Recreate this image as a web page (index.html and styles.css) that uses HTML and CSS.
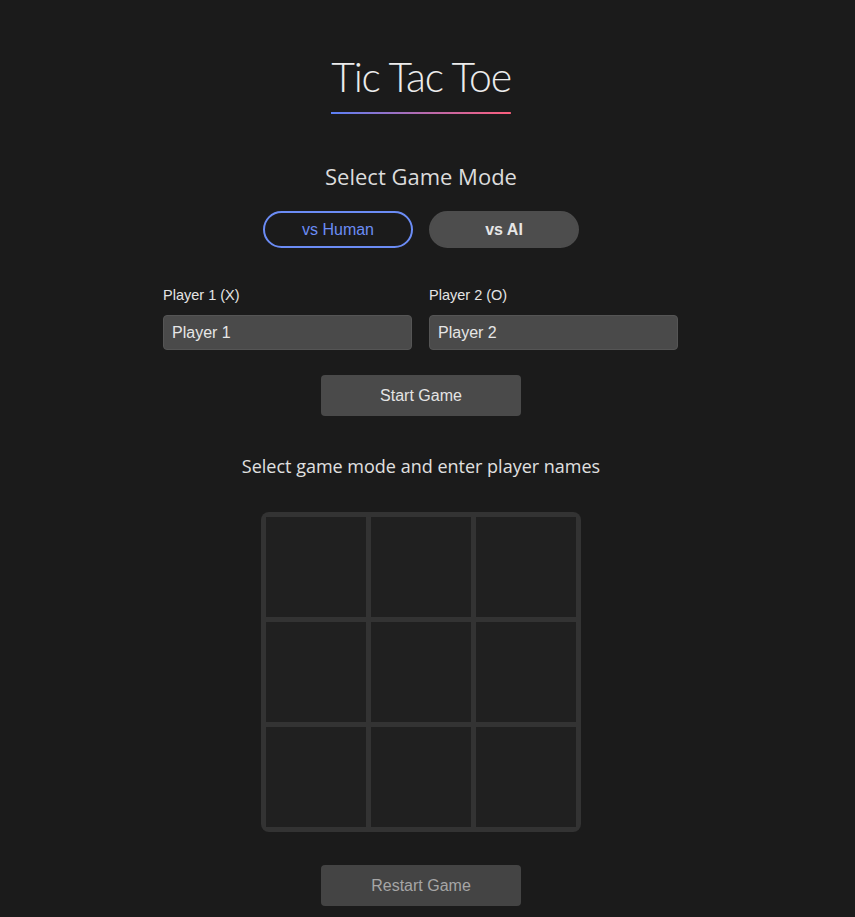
FILE: index.html
```html
<!DOCTYPE html>
<html lang="en">
<head>
<meta charset="utf-8">
<title>Tic Tac Toe</title>
<link rel="stylesheet" href="styles.css">
</head>
<body>
<main class="app">
  <h1 class="title">Tic Tac Toe</h1>
  <h2 class="mode-heading">Select Game Mode</h2>
  <div class="mode-buttons">
    <button class="mode-btn active">vs Human</button>
    <button class="mode-btn">vs AI</button>
  </div>
  <div class="players">
    <div class="field">
      <label class="field-label" for="p1">Player 1 (X)</label>
      <input class="field-input" id="p1" type="text" value="Player 1">
    </div>
    <div class="field">
      <label class="field-label" for="p2">Player 2 (O)</label>
      <input class="field-input" id="p2" type="text" value="Player 2">
    </div>
  </div>
  <button class="action-btn start">Start Game</button>
  <p class="status">Select game mode and enter player names</p>
  <div class="board">
    <div class="cell"></div><div class="cell"></div><div class="cell"></div>
    <div class="cell"></div><div class="cell"></div><div class="cell"></div>
    <div class="cell"></div><div class="cell"></div><div class="cell"></div>
  </div>
  <button class="action-btn restart" disabled>Restart Game</button>
</main>
</body>
</html>
```
FILE: styles.css
```css
html, body {
  margin: 0;
  padding: 0;
  background: #1b1b1b;
}

body {
  font-family: "Liberation Sans", Arial, sans-serif;
  color: #e0e0e0;
}

.app {
  width: 842px;
  display: flex;
  flex-direction: column;
  align-items: center;
}

.title {
  margin: 52px 0 0;
  padding-bottom: 12px;
  font: 300 41px/50px Lato, "Open Sans", sans-serif;
  letter-spacing: -1.2px;
  color: #ececec;
  background: linear-gradient(90deg, #5b80f6, #b46bb0 50%, #fb5e7c) bottom / 100% 2px no-repeat;
}

.mode-heading {
  margin: 46px 0 0;
  font: 400 22px/32px "Open Sans", sans-serif;
  color: #dcdcdc;
}

.mode-buttons {
  display: flex;
  gap: 16px;
  margin-top: 19px;
}

.mode-btn {
  width: 150px;
  height: 37px;
  border: 2px solid #4d4d4d;
  border-radius: 19px;
  background: #4d4d4d;
  color: #e6e6e6;
  font: 700 16px "Liberation Sans", Arial, sans-serif;
  padding: 0;
}

.mode-btn.active {
  background: transparent;
  border-color: #6b8cf5;
  color: #6b8cf5;
  font-weight: 400;
}

.players {
  display: flex;
  gap: 17px;
  margin-top: 39px;
  margin-right: 1px;
}

.field {
  display: flex;
  flex-direction: column;
  width: 249px;
}

.field-label {
  font-size: 14.5px;
  line-height: 16px;
  color: #e4e4e4;
  margin-bottom: 12px;
}

.field-input {
  box-sizing: border-box;
  height: 35px;
  width: 100%;
  padding: 0 8px;
  background: #4a4a4a;
  border: 1px solid #555;
  border-radius: 4px;
  color: #e6e6e6;
  font: 16px "Liberation Sans", Arial, sans-serif;
  outline: none;
}

.action-btn {
  width: 200px;
  height: 41px;
  border: none;
  border-radius: 4px;
  background: #4a4a4a;
  color: #e4e4e4;
  font: 16px "Liberation Sans", Arial, sans-serif;
  padding: 0;
}

.start {
  margin-top: 25px;
}

.status {
  margin: 38px 0 0;
  font: 400 18px/24px "Open Sans", sans-serif;
  color: #e0e0e0;
}

.board {
  margin-top: 34px;
  box-sizing: border-box;
  width: 320px;
  height: 320px;
  padding: 5px;
  display: grid;
  grid-template-columns: repeat(3, 1fr);
  grid-template-rows: repeat(3, 1fr);
  gap: 5px;
  background: #333;
  border-radius: 8px;
}

.cell {
  background: #202020;
}

.restart {
  margin-top: 33px;
  background: #444;
  color: #a6a6a6;
}
```
